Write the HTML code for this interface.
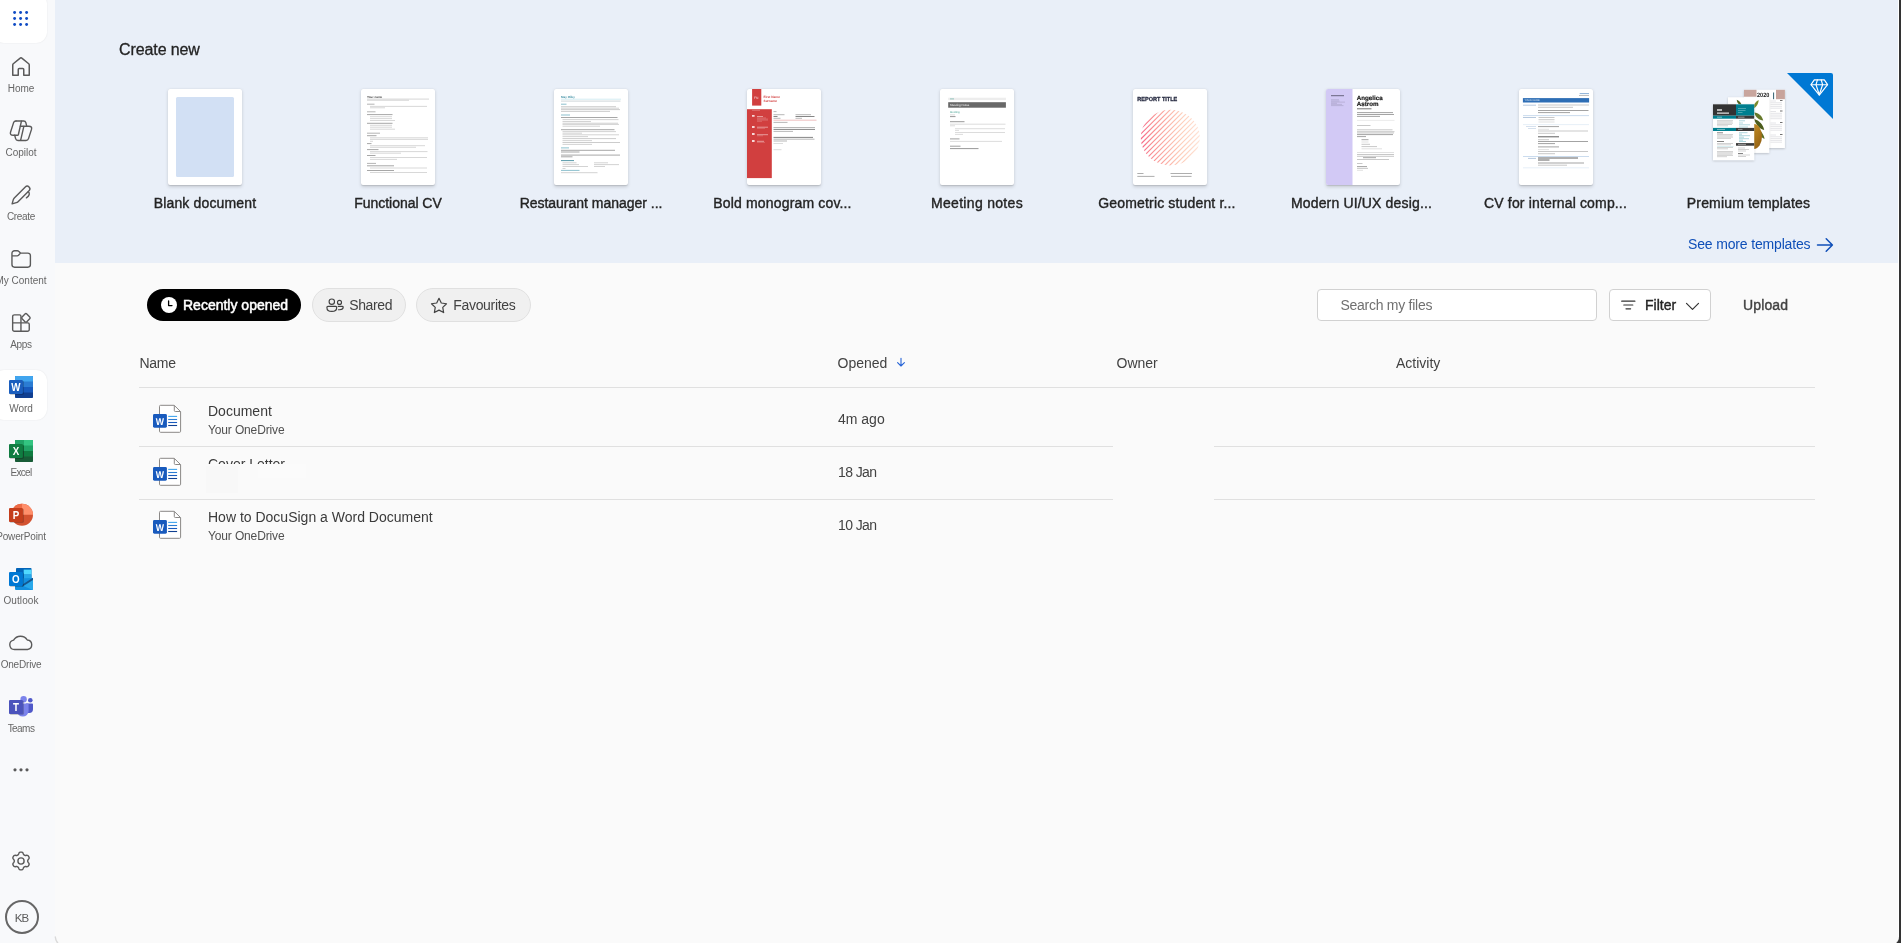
<!DOCTYPE html>
<html lang="en">
<head>
<meta charset="utf-8">
<title>Word</title>
<style>
*{box-sizing:border-box;margin:0;padding:0}
html,body{width:1901px;height:943px;overflow:hidden}
body{position:relative;will-change:transform;background:#fafafa;font-family:"Liberation Sans",sans-serif;color:#242424;-webkit-font-smoothing:antialiased}
.abs{position:absolute}
#edge{position:absolute;left:1898px;top:0;width:3px;height:943px;background:#333;border-left:1px solid #fff;z-index:20}
#side{position:absolute;left:0;top:0;width:55px;height:943px;background:#f8f9fb;overflow:hidden;z-index:5}
#hero{position:absolute;left:55px;top:0;width:1843px;height:263px;background:#e9eff8}
.sel{position:absolute;left:-7px;width:54.4px;height:50px;background:#fff;border-radius:11px;box-shadow:0 0 1.5px rgba(0,0,0,.10)}
.nav{position:absolute;left:-29px;width:100px;height:50px;text-align:center}
.nav svg{position:absolute;left:38px;top:5px;width:24px;height:24px;display:block}
.nav span{position:absolute;left:0;width:100px;top:33px;font-size:10px;line-height:12px;color:#666;white-space:nowrap}
h2{position:absolute;left:119px;top:40px;font-size:16px;line-height:20px;font-weight:400;color:#242424;letter-spacing:-.1px;-webkit-text-stroke:.3px #242424}
.th{position:absolute;top:89px;width:74px;height:96px;background:#fff;border-radius:2px;box-shadow:0 1.6px 3.6px rgba(0,0,0,.15),0 .3px .9px rgba(0,0,0,.1);overflow:hidden}
.th svg{display:block;width:74px;height:96px}
.tl{position:absolute;top:193px;width:193px;text-align:center;font-size:14px;line-height:20px;font-weight:400;color:#242424;letter-spacing:.16px;-webkit-text-stroke:.38px #242424;white-space:nowrap}
#more{position:absolute;left:1688px;top:234px;font-size:14px;line-height:20px;color:#0f4fb8;white-space:nowrap;letter-spacing:-.16px}
.pill{position:absolute;top:288px;height:34px;border-radius:17px;border:1px solid #e0e0e0;background:#f0f0f0;font-size:14px;line-height:32px;color:#424242;white-space:nowrap}
.pill svg{position:absolute;display:block}
.pill span{position:absolute;top:0}
.hd{position:absolute;top:353px;font-size:14px;line-height:20px;color:#424242;white-space:nowrap}
.ln{position:absolute;left:139px;width:1676px;height:1px;background:#e0e0e0}
.fn{position:absolute;left:208px;font-size:14px;line-height:20px;color:#3b3b3b;white-space:nowrap}
.fs{position:absolute;left:208px;font-size:12px;line-height:16px;color:#505050;white-space:nowrap;letter-spacing:-.14px}
.dt{position:absolute;left:838px;font-size:14px;line-height:20px;color:#424242;white-space:nowrap}
.wi{position:absolute;left:150px;width:32px;height:32px}
svg text{text-rendering:geometricPrecision}
</style>
</head>
<body>
<div id="hero"></div>
<h2>Create new</h2>
<!-- T1 blank -->
<div class="th" style="left:168px"><svg viewBox="0 0 74 96"><rect x="8" y="8" width="58" height="80" rx="1.5" fill="#d2e0f4"/></svg></div>
<!-- T2 -->
<div class="th" id="t2" style="left:361px"><svg viewBox="0 0 74 96"><text x="6" y="8.9" font-family="Liberation Sans,sans-serif" font-weight="700" font-size="3" fill="#444">Your name</text><path d="M6 10.1H68" stroke="#999" stroke-width="0.4" fill="none"/><path d="M6 25.6H31.5M6 34.3H31.5M6 46.7H15.5M6 54.6H10.5M6 60.6H17.5M6 66.5H14.5M6 76.8H33M6 81.5H33" stroke="#333" stroke-width="0.7" opacity="0.62" fill="none"/><path d="M6 15.2H13.5M6 22.8H14.5M6 44.2H19M6 74.4H15" stroke="#666" stroke-width="0.7" opacity="0.7" fill="none"/><path d="M6 11.3H48M9 17.4H66M9 18.8H24M9 27.7H31M9 29.6H31M9 31.5H34M9 36.3H31M9 38.2H31M9 40.2H34M9 48.8H67M9 50.4H67M9 52.3H12M9 56.7H64M9 58.3H55M9 62.6H66.5M9 64.2H40M9 68.5H66M9 70.4H36M9 79H66M9 83.5H66" stroke="#888" stroke-width="0.6" opacity="0.55" fill="none"/></svg></div>
<!-- T3 -->
<div class="th" id="t3" style="left:554px"><svg viewBox="0 0 74 96"><text x="7.1" y="9.3" font-family="Liberation Sans,sans-serif" font-weight="700" font-size="3" fill="#3c8ea3">May Riley</text><path d="M7 10.2H67" stroke="#cfeaf0" stroke-width="0.9" fill="none"/><path d="M7 12.1H66.5" stroke="#8a9aa0" stroke-width="0.6" opacity="0.7" fill="none"/><path d="M7 15.2H12.5M7 26H16M7 58.9H15M7 81.4H25.5" stroke="#4a9cb0" stroke-width="0.8" opacity="0.8" fill="none"/><path d="M7 71.6H20" stroke="#2f7f95" stroke-width="0.9" opacity="0.9" fill="none"/><path d="M7 28.5H63.5M7 40.7H60.5M7 61.3H61M7 63H25.5M7 66.1H66M7 67.8H18.5" stroke="#333" stroke-width="0.7" opacity="0.62" fill="none"/><path d="M7 17.7H62M7 20.6H66M7 22.4H56M8.5 49.6H62M8.5 53.5H66" stroke="#555" stroke-width="0.6" opacity="0.5" fill="none"/><path d="M7 19.2H65M8.5 30.6H64.5M8.5 32.5H37M8.5 34.2H64M8.5 35.4H65M8.5 37.2H46M8.5 42.6H62M8.5 44.2H28M8.5 45.8H65M8.5 47.6H34M8.5 51.6H38M8.5 55.4H38M8.5 73.8H22.5M40 73.8H54M8.5 75.6H25M40 75.6H65M8.5 77.5H34M40 77.5H51M8.5 79.5H11.5M7 83.7H43.5" stroke="#777" stroke-width="0.6" opacity="0.55" fill="none"/></svg></div>
<!-- T4 -->
<div class="th" id="t4" style="left:747px"><svg viewBox="0 0 74 96"><rect x="5.1" y="0" width="9.2" height="16.6" fill="#d13f3f"/><rect x="0" y="20.2" width="24.8" height="68.9" fill="#d13f3f"/><text x="7" y="9.9" font-family="Liberation Sans,sans-serif" font-size="3.3" fill="#fff" opacity=".85">FN</text><text x="16.5" y="9.4" font-family="Liberation Sans,sans-serif" font-weight="700" font-size="3.2" fill="#d13f3f">First Name</text><text x="16.5" y="12.5" font-family="Liberation Sans,sans-serif" font-weight="700" font-size="3.2" fill="#d13f3f">Surname</text><path d="M5 21.3H13" stroke="#fff" stroke-width="0.5" opacity="0.5" fill="none"/><path d="M5 26.8H7.6M5 38H7.6M5 45H7.6M5 52H7.6" stroke="#fff" stroke-width="1.8" opacity="0.8" fill="none"/><path d="M10 27.5H16M10 38.2H21M10 45.7H21M10 52.3H17" stroke="#fff" stroke-width="0.6" opacity="0.8" fill="none"/><path d="M10 28.9H19M10 30H21M10 31.1H21M10 32.3H15M10 39.4H18M10 46.8H16M10 53.4H18" stroke="#fff" stroke-width="0.5" opacity="0.4" fill="none"/><path d="M26.5 31.2H69.5" stroke="#d13f3f" stroke-width="0.4" opacity="0.8" fill="none"/><path d="M26.5 27.5H30.5M48.5 27.5H67.5M26.5 40.4H68M26.5 48.4H66" stroke="#333" stroke-width="0.7" opacity="0.85" fill="none"/><path d="M26.5 22.6H29.5M26.5 25.7H37.5M48.5 25.7H64M26.5 29.3H33.5M48.5 29.3H55M26.5 33.4H40.5M26.5 38.5H68M26.5 42.4H46M26.5 50.2H67.5M26.5 52H40" stroke="#555" stroke-width="0.6" opacity="0.7" fill="none"/><path d="M26.5 54.5H36M26.5 60.7H34.5" stroke="#888" stroke-width="0.6" opacity="0.5" fill="none"/></svg></div>
<!-- T5 -->
<div class="th" id="t5" style="left:940px"><svg viewBox="0 0 74 96"><rect x="8.2" y="8.700" width="57.7" height="2.4" fill="#ededed"/><rect x="8.200" y="13.2" width="57.7" height="5.5" fill="#686868"/><path d="M10 9.9H14" stroke="#3a9c8c" stroke-width="0.7" opacity="0.7" fill="none"/><text x="10" y="17" font-family="Liberation Sans,sans-serif" font-size="3" fill="#fff" opacity=".9">Meeting Notes</text><text x="10" y="24.1" font-family="Liberation Sans,sans-serif" font-size="2.7" fill="#3a9c8c">Meeting</text><path d="M10 27.6H15.5M10 32.7H24.5M10 59.6H38.5" stroke="#333" stroke-width="0.6" opacity="0.85" fill="none"/><path d="M10 49.9H19.5M10 57.2H20.5" stroke="#555" stroke-width="0.8" opacity="0.7" fill="none"/><path d="M10 25.9H15M10 35.2H65.5M10 36.8H15M15 39.7H65M15 41.4H19M15 43.5H65M15 45.4H23M10 52.4H62" stroke="#888" stroke-width="0.6" opacity="0.5" fill="none"/></svg></div>
<!-- T6 -->
<div class="th" id="t6" style="left:1133px"><svg viewBox="0 0 74 96"><defs><linearGradient id="gg" x1="0" y1="0" x2="1" y2="0"><stop offset="0" stop-color="#f23a76"/><stop offset=".3" stop-color="#f98d8e"/><stop offset=".6" stop-color="#fdc9b4"/><stop offset="1" stop-color="#fff4ec"/></linearGradient><clipPath id="gc"><ellipse cx="37.3" cy="48.6" rx="29.6" ry="27.8"/></clipPath></defs><text x="4.3" y="12" font-family="Liberation Sans,sans-serif" font-weight="700" font-size="5.8" fill="#2b2f45" stroke="#2b2f45" stroke-width=".3" textLength="40" lengthAdjust="spacingAndGlyphs">REPORT TITLE</text><g clip-path="url(#gc)"><path d="M-4.2 52.0L41.0 6.8M-1.7 54.5L43.5 9.3M0.8 57.1L46.1 11.8M3.3 59.6L48.6 14.3M5.8 62.1L51.1 16.8M8.3 64.6L53.6 19.3M10.8 67.1L56.1 21.8M13.4 69.6L58.6 24.4M15.9 72.1L61.1 26.9M18.4 74.6L63.6 29.4M20.9 77.1L66.1 31.9M23.4 79.6L68.6 34.4M25.9 82.2L71.2 36.9M28.4 84.7L73.7 39.4M30.9 87.2L76.2 41.9M33.4 89.7L78.7 44.4M35.9 92.2L81.2 46.9" stroke="url(#gg)" stroke-width="1.15" fill="none" opacity=".95"/></g><path d="M4.3 84.5H10.5M4.3 87.4H21.5M37.5 84.5H59M38 87.4H58.5" stroke="#555" stroke-width="0.8" opacity="0.6" fill="none"/></svg></div>
<!-- T7 -->
<div class="th" id="t7" style="left:1326px"><svg viewBox="0 0 74 96"><rect x="0" y="0" width="26.5" height="96" fill="#d2c9f5"/><path d="M5 6.7H18" stroke="#2a2a3a" stroke-width="0.7" opacity="0.9" fill="none"/><path d="M5 10.7H13M5 12H13.5M5 13.1H19M5 14.3H11M5 15.4H16M5 16.6H17.5" stroke="#7d7896" stroke-width="0.5" opacity="0.6" fill="none"/><text x="30.8" y="11.3" font-family="Liberation Sans,sans-serif" font-weight="700" font-size="6.2" fill="#1c1c1c" stroke="#1c1c1c" stroke-width=".2">Angelica</text><text x="30.8" y="17.2" font-family="Liberation Sans,sans-serif" font-weight="700" font-size="6.2" fill="#1c1c1c" stroke="#1c1c1c" stroke-width=".2">Astrom</text><path d="M31 19.8H45.5" stroke="#222" stroke-width="0.7" opacity="0.9" fill="none"/><path d="M31 31.4H68.5" stroke="#bbb" stroke-width="0.3" fill="none"/><path d="M31 23.6H67M31 25.5H68M31 27.4H54M31 45.6H67M31 47.6H40M35.5 50.7H42.5M37 68.7H50M31 77.6H41" stroke="#333" stroke-width="0.6" opacity="0.75" fill="none"/><path d="M31 36.5H44.5M31 40.8H66.5M31 42.7H68.5M31 44H68M35.5 55.3H44M35.5 57.6H51M31 65.5H68M31 67.3H68M31 70.5H63M31 74.5H36.5M31 79.4H42" stroke="#666" stroke-width="0.6" opacity="0.6" fill="none"/><path d="M35.5 53H42.5M35.5 59.8H56M31 63.5H68M31 81.3H37" stroke="#999" stroke-width="0.6" opacity="0.5" fill="none"/></svg></div>
<!-- T8 -->
<div class="th" id="t8" style="left:1519px"><svg viewBox="0 0 74 96"><rect x="3.9" y="9.100" width="66.2" height="4.4" fill="#2e6eb5"/><text x="5.5" y="12.2" font-family="Liberation Sans,sans-serif" font-size="2.5" fill="#fff" opacity=".8">YOUR NAME</text><path d="M60.7 4.6H70" stroke="#2e6fb5" stroke-width="0.7" opacity="0.8" fill="none"/><path d="M60 6.5H70" stroke="#666" stroke-width="0.6" opacity="0.7" fill="none"/><path d="M4 26.6H70M4 67.5H70" stroke="#7fa8d6" stroke-width="0.45" opacity="0.9" fill="none"/><path d="M4 35.6H70M4 78.8H70" stroke="#cfe0f0" stroke-width="0.5" fill="none"/><path d="M4 16.2H17M4 28.5H17M9 69.4H17" stroke="#5f86b5" stroke-width="0.6" opacity="0.75" fill="none"/><path d="M7 37.5H17M9 39.5H17" stroke="#9db7d6" stroke-width="0.6" opacity="0.7" fill="none"/><path d="M19 47.8H40M19 69H59M19 71H30.5" stroke="#222" stroke-width="0.8" opacity="0.9" fill="none"/><path d="M19 37.6H40M19 57.9H40M19 21.5H69.5M19 23.6H51M19 52.5H69M19 54.6H36M19 74H65" stroke="#444" stroke-width="0.7" opacity="0.7" fill="none"/><path d="M19 16H70M19 18.3H54M19.5 28.5H35.5M19.5 30.7H35.5M19 42H69M19 44.3H36M19 50.7H30M19 62.5H69M19 64.7H36M19 76.2H48" stroke="#666" stroke-width="0.6" opacity="0.6" fill="none"/><path d="M19.5 33H35.5M19 40.3H30M19 60.6H30" stroke="#999" stroke-width="0.6" opacity="0.5" fill="none"/></svg></div>
<!-- T9 premium -->
<div id="prem" class="abs" style="left:1700px;top:68px;width:140px;height:110px"><svg width="140" height="110" viewBox="0 0 140 110" style="display:block;overflow:visible"><defs><filter id="ps" x="-10%" y="-10%" width="120%" height="125%"><feDropShadow dx="0" dy=".8" stdDeviation=".9" flood-color="#000" flood-opacity=".22"/></filter><linearGradient id="pear" x1="0" y1="0" x2="1" y2="1"><stop offset="0" stop-color="#d9a02a"/><stop offset="1" stop-color="#8c5a12"/></linearGradient></defs><path d="M87 5H131a2 2 0 0 1 2 2V51Z" fill="#0078d4"/><g fill="none" stroke="#fff" stroke-width="1.150" stroke-linejoin="round" stroke-linecap="round"><path d="M114.300 11.900H124.300L127.600 16.700 119.300 27.200 111 16.700Z"/><path d="M111.200 16.700H127.400M117.400 11.900L116 16.700 119.300 26.800 122.600 16.700 121.200 11.900"/></g><g filter="url(#ps)"><rect x="44" y="21.800" width="40.900" height="58.200" fill="#fff"/></g><rect x="44" y="21.800" width="12.500" height="6.900" fill="#c9a69e"/><rect x="76" y="21.800" width="8.900" height="9.400" fill="#c7a39b"/><path d="M73.600 24.500V31.200" stroke="#2f5f70" stroke-width="1"/><text x="57" y="28.600" font-family="Liberation Sans,sans-serif" font-weight="700" font-size="6.200" fill="#222" textLength="12.300" lengthAdjust="spacingAndGlyphs">2020</text><path d="M70.5 33H76M70.5 34.8H82M70.5 36.6H82M70.5 38.4H82M70.5 40.2H82M70.5 43.5H76M70.5 45.3H82M70.5 47.1H82M70.5 48.9H82M70.5 50.7H82M70.5 55H76M70.5 56.8H82M70.5 58.6H82M70.5 60.4H82M70.5 62.2H82M70.5 67H76M70.5 68.8H82M70.5 70.6H82M70.5 72.4H82M70.5 74.2H82" stroke="#8a8a96" stroke-width="0.5" opacity="0.45" fill="none"/><path d="M80 32.5H82.5M80 43H82.5M80 54.5H82.5M80 66.5H82.5" stroke="#333" stroke-width="1.2" opacity="0.7" fill="none"/><g filter="url(#ps)"><rect x="28" y="29.300" width="41.200" height="55.600" fill="#fff"/></g><path d="M36.800 31.800c2.500 1.200 4.500 3.200 5 5.600c-2.800-.4-5-2.800-5-5.600Z" fill="#55641f"/><path d="M58.600 32c-3.200 1.600-5.200 4.600-5.400 8.600c3.200-1.400 5.400-4.600 5.400-8.600Z" fill="#7b8b2c"/><path d="M54.200 44.500c4.500.5 8 3.500 9 8c-4-.3-7.500-2.800-9-8Z" fill="#66782a"/><path d="M54.200 51c5 1.500 9 5.500 10 11c-4.500-1-8.500-5-10-11Z" fill="#4c5c1c"/><path d="M57.500 61c3.500 2 6.500 5.500 7 10c-3.500-1.500-6.500-5-7-10Z" fill="#5d6d22"/><ellipse cx="54" cy="68.500" rx="8" ry="12.500" fill="url(#pear)"/><g filter="url(#ps)"><rect x="13" y="36.300" width="41.200" height="55.800" fill="#fff"/></g><rect x="13" y="36.300" width="23" height="11.400" fill="#333"/><rect x="36" y="36.300" width="18.200" height="11.400" fill="#007f8f"/><rect x="13" y="47.700" width="23" height="3" fill="#007f8f"/><rect x="36" y="47.700" width="18.200" height="3" fill="#3a3a3a"/><rect x="13" y="59.900" width="23" height="3.100" fill="#007f8f"/><rect x="36" y="59.900" width="18.200" height="3.100" fill="#3a3a3a"/><rect x="36" y="75.100" width="18.200" height="2.600" fill="#3a3a3a"/><path d="M17 42H22M17 45.2H29" stroke="#fff" stroke-width="1.3" opacity="0.85" fill="none"/><path d="M38 40.5H46M38 42.5H45.5M38 44.5H42.5" stroke="#fff" stroke-width="0.6" opacity="0.5" fill="none"/><path d="M17 49.2H22M17 61.4H25M38 49.2H44.5M38 61.4H42.5M38 76.4H46" stroke="#fff" stroke-width="0.7" opacity="0.7" fill="none"/><path d="M17 52.6H33M17 53.9H32.5M17 55.2H33M17 56.5H32M17 57.8H28M17 66.5H33M17 67.8H32.5M17 69.1H33M17 70.4H31M17 75.5H33M17 76.8H31M17 79.5H33M17 80.8H28M17 83.5H33M17 84.8H33M17 86.1H32.5M17 87.4H33M17 88.7H27M38 80H45M38 81.5H49M38 83H46M38 87H50M38 88.5H46" stroke="#777" stroke-width="0.55" opacity="0.6" fill="none"/><path d="M17 64.8H23M17 73.5H24M38 85.5H43" stroke="#222" stroke-width="0.7" opacity="0.8" fill="none"/><path d="M39 52.8H45M39 55H43M39 56.8H50M39 59H48M39 64.7H47.5M39 66.2H42M39 67.7H50M39 69.2H44M39 70.7H49M39 72.2H43M39 73.5H46" stroke="#2a94a6" stroke-width="0.55" opacity="0.7" fill="none"/><path d="M17 78.5H33.5" stroke="#9fd3dc" stroke-width="0.4" fill="none"/></svg></div>
<div class="tl" style="left:108.5px">Blank document</div>
<div class="tl" style="left:301.5px;letter-spacing:-.03px">Functional CV</div>
<div class="tl" style="left:494.5px;letter-spacing:-.02px">Restaurant manager ...</div>
<div class="tl" style="left:686px">Bold monogram cov...</div>
<div class="tl" style="left:880.5px;letter-spacing:.31px">Meeting notes</div>
<div class="tl" style="left:1070.5px">Geometric student r...</div>
<div class="tl" style="left:1265px">Modern UI/UX desig...</div>
<div class="tl" style="left:1459px">CV for internal comp...</div>
<div class="tl" style="left:1652px">Premium templates</div>
<div id="more">See more templates</div>
<svg class="abs" style="left:1816px;top:237px" width="18" height="16" viewBox="0 0 18 16"><path d="M1.5 8H16.2M10.2 1.8L16.4 8L10.2 14.2" fill="none" stroke="#0f4fb8" stroke-width="1.5" stroke-linecap="round" stroke-linejoin="round"/></svg>
<!-- pills -->
<div class="pill" style="left:146px;width:156px;background:#000;border-color:transparent;background-clip:padding-box;color:#fff;font-weight:400;-webkit-text-stroke:.5px #fff;letter-spacing:0">
<svg style="left:14px;top:8px" width="16" height="16" viewBox="0 0 16 16"><circle cx="8" cy="8" r="8" fill="#fff"/><path d="M7.6 4v4.6h3.4" fill="none" stroke="#000" stroke-width="1.3" stroke-linecap="round" stroke-linejoin="round"/></svg>
<span style="left:36px">Recently opened</span></div>
<div class="pill" style="left:312px;width:94px">
<svg style="left:13px;top:9px" width="19" height="15" viewBox="0 0 19 15"><g fill="none" stroke="#424242" stroke-width="1.150" stroke-linecap="round"><circle cx="5.800" cy="3.650" r="2.700"/><path d="M1.900 8.400H9.700a1 1 0 0 1 1 1c0 2.600-2.200 4-4.900 4s-4.900-1.400-4.900-4a1 1 0 0 1 1-1Z"/><circle cx="13.500" cy="4.400" r="2"/><path d="M12.200 8.400H16.300a.900.900 0 0 1 .900.900c0 1.600-1.500 2.400-3.400 2.400h-1.400"/></g></svg>
<span style="left:36.200px;letter-spacing:-.35px">Shared</span></div>
<div class="pill" style="left:416px;width:115px">
<svg style="left:13px;top:8px" width="18" height="17" viewBox="0 0 18 17"><path d="M9 1.300l2.300 4.700 5.200.750-3.750 3.650.900 5.150L9 13.100l-4.650 2.450.900-5.150L1.500 6.750 6.700 6z" fill="none" stroke="#424242" stroke-width="1.2" stroke-linejoin="round"/></svg>
<span style="left:36.200px;letter-spacing:-.3px">Favourites</span></div>
<!-- search / filter / upload -->
<div class="abs" style="left:1317px;top:289px;width:280px;height:32px;background:#fff;border:1px solid #d1d1d1;border-radius:4px"><span class="abs" style="left:22.500px;top:5px;font-size:14px;line-height:20px;color:#707070;white-space:nowrap;letter-spacing:-.27px">Search my files</span></div>
<div class="abs" style="left:1609px;top:289px;width:102px;height:32px;background:#fff;border:1px solid #d1d1d1;border-radius:4px">
<svg class="abs" style="left:11px;top:10px" width="16" height="10" viewBox="0 0 16 10"><path d="M.700 1.200h13.200M2.800 5h9M5 8.800h4.600" fill="none" stroke="#333" stroke-width="1.200" stroke-linecap="round"/></svg>
<span class="abs" style="left:35px;top:5px;font-size:14px;line-height:20px;font-weight:400;-webkit-text-stroke:.38px #242424;color:#242424">Filter</span>
<svg class="abs" style="left:75px;top:12px" width="15" height="9" viewBox="0 0 15 9"><path d="M1.500 1.300l6 6 6-6" fill="none" stroke="#333" stroke-width="1.200" stroke-linecap="round" stroke-linejoin="round"/></svg>
</div>
<div class="abs" style="left:1743px;top:295px;font-size:14px;line-height:20px;font-weight:400;-webkit-text-stroke:.38px #424242;color:#424242;letter-spacing:.13px">Upload</div>
<!-- table -->
<div class="hd" style="left:139.500px;letter-spacing:-.3px">Name</div>
<div class="hd" style="left:837.500px">Opened</div>
<svg class="abs" style="left:895px;top:356px" width="12" height="12" viewBox="0 0 12 12"><path d="M6 2.200v7.600M2.600 6.700L6 10l3.400-3.300" fill="none" stroke="#2563d6" stroke-width="1.100" stroke-linecap="round" stroke-linejoin="round"/></svg>
<div class="hd" style="left:1116.500px">Owner</div>
<div class="hd" style="left:1396px">Activity</div>
<div class="ln" style="top:387px"></div>
<div class="ln" style="top:446px"></div>
<div class="ln" style="top:499px"></div>
<div class="abs" style="left:1113px;top:395px;width:101px;height:160px;background:#fafafa"></div>
<!-- row 1 -->
<svg class="wi" style="top:403px" viewBox="0 0 32 32"><path d="M10.500 2.300H24.200L30.600 8.600V28.300a1 1 0 0 1-1 1H10.500a1 1 0 0 1-1-1V3.300a1 1 0 0 1 1-1Z" fill="#fff" stroke="#8a8886" stroke-width="1"/><path d="M24.300 2.600V7.500a1 1 0 0 0 1 1H30.400" fill="none" stroke="#8a8886" stroke-width="1"/><path d="M18.200 13.400H27.100" stroke="#41a5ee" stroke-width="1.100"/><path d="M18.200 16.500H27.100" stroke="#2b7cd3" stroke-width="1.100"/><path d="M18.200 19.500H27.100" stroke="#185abd" stroke-width="1.100"/><path d="M18.200 22.500H27.100" stroke="#103f91" stroke-width="1.100"/><rect x="3" y="10.900" width="13.900" height="13.800" rx="1.400" fill="#185abd"/><text transform="translate(9.950 21.900) scale(.900 1)" font-size="9.700" font-weight="700" fill="#fff" text-anchor="middle" font-family="Liberation Sans,sans-serif">W</text></svg>
<div class="fn" style="top:401px">Document</div>
<div class="fs" style="top:422px">Your OneDrive</div>
<div class="dt" style="top:409px">4m ago</div>
<!-- row 2 -->
<svg class="wi" style="top:456px" viewBox="0 0 32 32"><path d="M10.500 2.300H24.200L30.600 8.600V28.300a1 1 0 0 1-1 1H10.500a1 1 0 0 1-1-1V3.300a1 1 0 0 1 1-1Z" fill="#fff" stroke="#8a8886" stroke-width="1"/><path d="M24.300 2.600V7.500a1 1 0 0 0 1 1H30.400" fill="none" stroke="#8a8886" stroke-width="1"/><path d="M18.200 13.400H27.100" stroke="#41a5ee" stroke-width="1.100"/><path d="M18.200 16.500H27.100" stroke="#2b7cd3" stroke-width="1.100"/><path d="M18.200 19.500H27.100" stroke="#185abd" stroke-width="1.100"/><path d="M18.200 22.500H27.100" stroke="#103f91" stroke-width="1.100"/><rect x="3" y="10.900" width="13.900" height="13.800" rx="1.400" fill="#185abd"/><text transform="translate(9.950 21.900) scale(.900 1)" font-size="9.700" font-weight="700" fill="#fff" text-anchor="middle" font-family="Liberation Sans,sans-serif">W</text></svg>
<div class="fn" style="top:454px">Cover Letter</div>
<div class="abs" style="left:206px;top:464px;width:104px;height:29px;background:#fafafa"></div>
<div class="abs" style="left:206px;top:466px;width:32px;height:27px;background:#f8f8f8"></div>
<div class="abs" style="left:258px;top:464px;width:48px;height:14px;background:#fbfbfb"></div>
<div class="dt" style="top:462px;letter-spacing:-.6px">18 Jan</div>
<!-- row 3 -->
<svg class="wi" style="top:509px" viewBox="0 0 32 32"><path d="M10.500 2.300H24.200L30.600 8.600V28.300a1 1 0 0 1-1 1H10.500a1 1 0 0 1-1-1V3.300a1 1 0 0 1 1-1Z" fill="#fff" stroke="#8a8886" stroke-width="1"/><path d="M24.300 2.600V7.500a1 1 0 0 0 1 1H30.400" fill="none" stroke="#8a8886" stroke-width="1"/><path d="M18.200 13.400H27.100" stroke="#41a5ee" stroke-width="1.100"/><path d="M18.200 16.500H27.100" stroke="#2b7cd3" stroke-width="1.100"/><path d="M18.200 19.500H27.100" stroke="#185abd" stroke-width="1.100"/><path d="M18.200 22.500H27.100" stroke="#103f91" stroke-width="1.100"/><rect x="3" y="10.900" width="13.900" height="13.800" rx="1.400" fill="#185abd"/><text transform="translate(9.950 21.900) scale(.900 1)" font-size="9.700" font-weight="700" fill="#fff" text-anchor="middle" font-family="Liberation Sans,sans-serif">W</text></svg>
<div class="fn" style="top:507px">How to DocuSign a Word Document</div>
<div class="fs" style="top:528px">Your OneDrive</div>
<div class="dt" style="top:515px;letter-spacing:-.6px">10 Jan</div>
<div id="side">
<div class="sel" style="top:-7px"></div>
<svg class="abs" style="left:11px;top:9px" width="20" height="20" viewBox="0 0 20 20"><g fill="#0f4bc4"><circle cx="3.6" cy="3.5" r="1.45"/><circle cx="9.6" cy="3.5" r="1.45"/><circle cx="15.6" cy="3.5" r="1.45"/><circle cx="3.6" cy="9.5" r="1.45"/><circle cx="9.6" cy="9.5" r="1.45"/><circle cx="15.6" cy="9.5" r="1.45"/><circle cx="3.6" cy="15.5" r="1.45"/><circle cx="9.6" cy="15.5" r="1.45"/><circle cx="15.6" cy="15.5" r="1.45"/></g></svg>
<div class="sel" style="top:370px"></div>
<!-- Home -->
<div class="nav" style="top:50px"><svg viewBox="0 0 24 24"><path d="M3.750 20.250V9.900c0-.450.200-.850.530-1.140L11.500 2.900a.750.750 0 0 1 1 0L19.720 8.760c.330.290.530.700.530 1.140V20.250H14.750V14.500a1 1 0 0 0-1-1h-3.500a1 1 0 0 0-1 1V20.250Z" fill="none" stroke="#5a5a5a" stroke-width="1.500" stroke-linejoin="round"/></svg><span>Home</span></div>
<!-- Copilot -->
<div class="nav" style="top:114px"><svg viewBox="0 0 24 24"><g fill="none" stroke="#5a5a5a" stroke-width="1.400" stroke-linejoin="round" stroke-linecap="round"><path d="M7 1.950H14.600Q16.400 1.950 16.900 3.800L17.700 7.200"/><path d="M7 1.950Q5.200 1.950 4.600 3.600L1.500 13.300Q.700 16.200 4.200 16.200H8.600Q9.200 16.200 9.400 15.500L12.450 2.200"/><path d="M11.400 7.200H19.800Q23.400 7.200 22.500 10.400L19.500 19.600Q18.900 21.450 17 21.450H9Q7.100 21.450 6.600 19.600L5.700 16.200"/><path d="M14.850 7.400L11.600 21.300"/></g></svg><span>Copilot</span></div>
<!-- Create -->
<div class="nav" style="top:178px"><svg viewBox="0 0 24 24"><g fill="none" stroke="#5a5a5a" stroke-width="1.400" stroke-linejoin="round" stroke-linecap="round"><path d="M3.100 20.900L4.300 16.600Q4.600 15.600 5.300 14.900L16.300 3.900a2.650 2.650 0 0 1 3.750 3.750L9.050 18.650Q8.300 19.400 7.300 19.700Z"/><path d="M19.300 8.700c1.800 1.500 1.300 4-1.900 6.100"/></g></svg><span style="letter-spacing:-0.33px">Create</span></div>
<!-- My Content -->
<div class="nav" style="top:242px"><svg viewBox="0 0 24 24"><path d="M2.950 8.850V6.400A2.600 2.600 0 0 1 5.550 3.800H8.300c.500 0 1 .200 1.350.550L11.500 6.100H18.800A2.600 2.600 0 0 1 21.400 8.700V17.600A2.600 2.600 0 0 1 18.800 20.200H5.550A2.600 2.600 0 0 1 2.950 17.600V8.850H8.200c.500 0 .950-.200 1.300-.550L11.500 6.100" fill="none" stroke="#5a5a5a" stroke-width="1.400" stroke-linejoin="round"/></svg><span>My Content</span></div>
<!-- Apps -->
<div class="nav" style="top:306px"><svg viewBox="0 0 24 24"><g fill="none" stroke="#5a5a5a" stroke-width="1.400" stroke-linejoin="round"><path d="M11.950 5.200Q11.950 3.850 10.600 3.850H5.400A1.750 1.750 0 0 0 3.650 5.600V18.500A1.750 1.750 0 0 0 5.400 20.250H18.500A1.750 1.750 0 0 0 20.250 18.500V13.300Q20.250 11.900 18.850 11.900H3.650M11.950 5.200V20.250"/><rect x="-3.350" y="-3.350" width="6.700" height="6.700" rx="1.300" transform="translate(16.900 6.850) rotate(45)"/></g></svg><span style="letter-spacing:-0.3px">Apps</span></div>
<!-- Word -->
<div class="nav" style="top:370px"><svg viewBox="0 0 24 24"><rect x="6" y="1" width="18" height="22" rx=".800" fill="#103f91"/><rect x="6" y="1" width="18" height="16.500" fill="#185abd"/><rect x="6" y="1" width="18" height="11" fill="#2b7cd3"/><rect x="6" y="1" width="18" height="5.500" rx=".500" fill="#41a5ee"/><rect x=".700" y="5.800" width="14.100" height="14" rx="1.300" fill="#000" opacity=".25"/><rect x="-.200" y="5" width="14.100" height="14" rx="1.300" fill="#1b5ebe"/><text transform="translate(6.900 16.100) scale(.850 1)" font-size="11.500" font-weight="700" fill="#fff" text-anchor="middle" font-family="Liberation Sans,sans-serif">W</text></svg><span>Word</span></div>
<!-- Excel -->
<div class="nav" style="top:434px"><svg viewBox="0 0 24 24"><rect x="6" y="1" width="18" height="22" rx=".800" fill="#185c37"/><rect x="15" y="1" width="9" height="16.500" fill="#107c41"/><rect x="6" y="1" width="9.200" height="11" fill="#107c41"/><rect x="15" y="1" width="9" height="11" fill="#21a366"/><rect x="6" y="1" width="9.200" height="5.500" fill="#21a366"/><rect x="15" y="1" width="9" height="5.500" fill="#33c481"/><rect x=".700" y="5.800" width="14.100" height="14" rx="1.300" fill="#000" opacity=".25"/><rect x="-.200" y="5" width="14.100" height="14" rx="1.300" fill="#107c41"/><text transform="translate(6.900 16.100) scale(.850 1)" font-size="11.500" font-weight="700" fill="#fff" text-anchor="middle" font-family="Liberation Sans,sans-serif">X</text></svg><span style="letter-spacing:-0.7px">Excel</span></div>
<!-- PowerPoint -->
<div class="nav" style="top:498px"><svg viewBox="0 0 24 24"><circle cx="13" cy="11.700" r="11" fill="#d35230"/><path d="M13 .700A11 11 0 0 0 2 11.700H13Z" fill="#ed6c47"/><path d="M13 .700A11 11 0 0 1 24 11.700H13Z" fill="#ff8f6b"/><rect x=".700" y="5.800" width="14.100" height="14" rx="1.300" fill="#000" opacity=".25"/><rect x="-.200" y="5" width="14.100" height="14" rx="1.300" fill="#c43e1c"/><text transform="translate(6.900 16.100) scale(.850 1)" font-size="11.500" font-weight="700" fill="#fff" text-anchor="middle" font-family="Liberation Sans,sans-serif">P</text></svg><span style="letter-spacing:-0.15px">PowerPoint</span></div>
<!-- Outlook -->
<div class="nav" style="top:562px"><svg viewBox="0 0 24 24"><rect x="7" y="1" width="15.500" height="13" rx=".800" fill="#0364b8"/><rect x="14.700" y="2.600" width="7.800" height="5" fill="#50d9ff"/><rect x="14.700" y="7.600" width="7.800" height="5" fill="#28a8ea"/><rect x="7" y="7.600" width="7.700" height="5" fill="#0078d4"/><path d="M6 11.500L24 11v11a1 1 0 0 1-1 1H7a1 1 0 0 1-1-1Z" fill="#1490df"/><path d="M24 11.200L13 18.500 24 23Z" fill="#28a8ea"/><path d="M24 10.800L12 18.600l1.600.900L24 13Z" fill="#123b6d" opacity=".75"/><rect x=".700" y="5.800" width="14.100" height="14" rx="1.300" fill="#000" opacity=".25"/><rect x="-.200" y="5" width="14.100" height="14" rx="1.300" fill="#0078d4"/><text transform="translate(6.900 16.100) scale(.850 1)" font-size="11.500" font-weight="700" fill="#fff" text-anchor="middle" font-family="Liberation Sans,sans-serif">O</text></svg><span style="letter-spacing:0.1px">Outlook</span></div>
<!-- OneDrive -->
<div class="nav" style="top:626px"><svg viewBox="0 0 24 24"><path d="M5.500 18.550a4.750 4.750 0 0 1-.900-9.400a8 8 0 0 1 13.700-.150a4.800 4.800 0 0 1 .200 9.550Z" fill="none" stroke="#5a5a5a" stroke-width="1.400" stroke-linejoin="round"/></svg><span style="letter-spacing:-0.2px">OneDrive</span></div>
<!-- Teams -->
<div class="nav" style="top:690px"><svg viewBox="0 0 24 24"><circle cx="21.300" cy="5.300" r="2.300" fill="#5059c9"/><path d="M17 8.600h6.200a.800.800 0 0 1 .800.800v4.800a3.700 3.700 0 0 1-3.700 3.700H17Z" fill="#5059c9"/><circle cx="14.600" cy="4.300" r="3.200" fill="#7b83eb"/><path d="M8 8.600h10.700a.900.900 0 0 1 .900.900v6.300a5.800 5.800 0 0 1-11.600 0Z" fill="#7b83eb"/><rect x=".700" y="5.800" width="14.100" height="14" rx="1.300" fill="#000" opacity=".25"/><rect x="-.200" y="5" width="14.100" height="14" rx="1.300" fill="#4b53bc"/><text transform="translate(6.900 16.100) scale(.850 1)" font-size="11.500" font-weight="700" fill="#fff" text-anchor="middle" font-family="Liberation Sans,sans-serif">T</text></svg><span style="letter-spacing:-0.55px">Teams</span></div>
<!-- more -->
<svg class="abs" style="left:11px;top:765px" width="20" height="10" viewBox="0 0 20 10"><g fill="#5a5a5a"><circle cx="4" cy="4.800" r="1.600"/><circle cx="10" cy="4.800" r="1.600"/><circle cx="16" cy="4.800" r="1.600"/></g></svg>
<!-- settings -->
<svg class="abs" style="left:9px;top:848.800px" width="24" height="24" viewBox="0 0 24 24"><path d="M18.71 12.00L18.74 11.56L18.87 11.10L19.23 10.56L19.77 9.92L20.12 9.24L20.14 8.63L19.97 8.07L19.71 7.55L19.39 7.07L18.99 6.64L18.45 6.34L17.69 6.31L16.86 6.46L16.22 6.50L15.75 6.38L15.36 6.19L14.99 5.94L14.65 5.60L14.37 5.02L14.08 4.23L13.67 3.59L13.15 3.27L12.58 3.14L12.00 3.10L11.42 3.14L10.85 3.27L10.33 3.59L9.92 4.23L9.63 5.02L9.35 5.60L9.01 5.94L8.64 6.19L8.25 6.38L7.78 6.50L7.14 6.46L6.31 6.31L5.55 6.34L5.01 6.64L4.61 7.07L4.29 7.55L4.03 8.07L3.86 8.63L3.88 9.24L4.23 9.92L4.77 10.56L5.13 11.10L5.26 11.56L5.29 12.00L5.26 12.44L5.13 12.90L4.77 13.44L4.23 14.08L3.88 14.76L3.86 15.37L4.03 15.93L4.29 16.45L4.61 16.93L5.01 17.36L5.55 17.66L6.31 17.69L7.14 17.54L7.78 17.50L8.25 17.62L8.64 17.81L9.01 18.06L9.35 18.40L9.63 18.98L9.92 19.77L10.33 20.41L10.85 20.73L11.42 20.86L12.00 20.90L12.58 20.86L13.15 20.73L13.67 20.41L14.08 19.77L14.37 18.98L14.65 18.40L14.99 18.06L15.36 17.81L15.75 17.62L16.22 17.50L16.86 17.54L17.69 17.69L18.45 17.66L18.99 17.36L19.39 16.93L19.71 16.45L19.97 15.93L20.14 15.37L20.12 14.76L19.77 14.08L19.23 13.44L18.87 12.90L18.74 12.44Z" fill="none" stroke="#5a5a5a" stroke-width="1.400" stroke-linejoin="round"/><circle cx="12" cy="12" r="3.100" fill="none" stroke="#5a5a5a" stroke-width="1.400"/></svg>
<!-- avatar -->
<div class="abs" style="left:5px;top:900px;width:34px;height:34px;border:2px solid #666;border-radius:50%;text-align:center;font-size:11.500px;line-height:33px;color:#5a5a5a;letter-spacing:-.8px;text-indent:-.800px">KB</div>
</div>
<div id="edge"></div>
<svg class="abs" style="left:1885px;top:929px;z-index:21" width="16" height="14" viewBox="0 0 16 14"><rect width="16" height="14" fill="#333"/><path d="M-5 -5H13.500V8.200A7.500 7.500 0 0 1 6 15.700H-5Z" fill="#fafafa" stroke="#fff" stroke-width="1"/></svg>
<svg class="abs" style="left:52px;top:933px;z-index:6" width="10" height="10" viewBox="0 0 10 10"><path d="M3.300 4Q3.600 8.200 6.600 11" fill="none" stroke="#000" stroke-opacity=".13" stroke-width="1.400" stroke-linecap="round"/></svg>

</body>
</html>
